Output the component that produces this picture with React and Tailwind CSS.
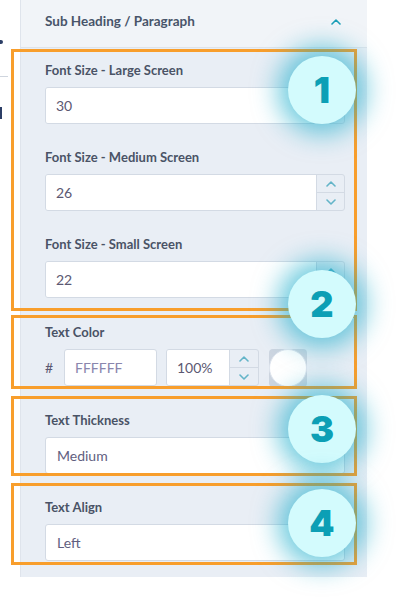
import React from "react";

const Chevron = ({ dir = "up", className = "" }) => (
  <svg width="10" height="6" viewBox="0 0 10 6" className={className} fill="none">
    {dir === "up" ? (
      <path d="M1 5 L5 1 L9 5" stroke="currentColor" strokeWidth="1.6" strokeLinecap="round" strokeLinejoin="round" />
    ) : (
      <path d="M1 1 L5 5 L9 1" stroke="currentColor" strokeWidth="1.6" strokeLinecap="round" strokeLinejoin="round" />
    )}
  </svg>
);

const Spinner = ({ w = "w-[28px]" }) => (
  <div className={`${w} h-full flex flex-col border-l border-[#d3dae4]`}>
    <div className="flex-1 flex items-center justify-center border-b border-[#d3dae4] text-[#63b4c8]">
      <Chevron dir="up" />
    </div>
    <div className="flex-1 flex items-center justify-center text-[#63b4c8]">
      <Chevron dir="down" />
    </div>
  </div>
);

const Label = ({ children }) => (
  <div className="text-[13px] leading-[16px] font-bold text-[#4a5366] mb-[9px]">{children}</div>
);

const NumberField = ({ label, value, className = "" }) => (
  <div className={className}>
    <Label>{label}</Label>
    <div className="w-[300px] h-[37px] flex border border-[#d3dae4] rounded-[3px] overflow-hidden">
      <div className="flex-1 bg-white flex items-center pl-[10px] text-[14px] text-[#5b5872]">{value}</div>
      <Spinner />
    </div>
  </div>
);

const SelectField = ({ label, value, className = "" }) => (
  <div className={className}>
    <Label>{label}</Label>
    <div className="w-[300px] h-[37px] bg-white border border-[#d3dae4] rounded-[3px] flex items-center pl-[11px] text-[14px] text-[#615e80]">
      {value}
    </div>
  </div>
);

const Badge = ({ n, top }) => (
  <div
    className="absolute left-[288px] w-[68px] h-[68px] rounded-full bg-[#d3fbfd] shadow-[0_0_26px_10px_rgba(14,168,200,0.6)] flex items-center justify-center text-[#0c9fb5] text-[36px] font-black"
    style={{ top, fontFamily: "Inter, 'Open Sans', sans-serif" }}
  >
    {n}
  </div>
);

export default function App() {
  return (
    <div
      className="relative w-[400px] h-[606px] bg-white overflow-hidden flex items-start"
      style={{ fontFamily: "Lato, 'Open Sans', sans-serif" }}
    >
      {/* clipped left sidebar remnants */}
      <div className="w-[20px] flex flex-col">
        <div className="mt-[40px] w-[3px] h-[4px] bg-[#2c3e66] rounded-r-sm" />
        <div className="mt-[32px] w-[8px] h-px bg-[#cfd5de]" />
        <div className="mt-[30px] w-[2px] h-[12px] bg-[#2c3e66]" />
      </div>

      {/* panel */}
      <div className="w-[347px] h-[577px] bg-[#e9eef5] border-l border-[#dfe4ec]">
        <div className="h-[48px] bg-[#f1f4f8] border-b border-[#dde3eb] flex items-center justify-between pl-[24px] pr-[26px] pb-[4px]">
          <span className="text-[13.5px] font-bold text-[#48546a]">Sub Heading / Paragraph</span>
          <Chevron dir="up" className="text-[#1a9fb8]" />
        </div>

        <div className="pl-[24px] pt-[14px]">
          <NumberField label="Font Size - Large Screen" value="30" />
          <NumberField label="Font Size - Medium Screen" value="26" className="mt-[25px]" />
          <NumberField label="Font Size - Small Screen" value="22" className="mt-[25px]" />

          <div className="mt-[26px]">
            <Label>Text Color</Label>
            <div className="flex items-center h-[37px]">
              <span className="w-[19px] text-[14px] text-[#5b5872]">#</span>
              <div className="w-[93px] h-full bg-white border border-[#d3dae4] rounded-[3px] flex items-center pl-[10px] text-[14px] text-[#8a86ad]">
                FFFFFF
              </div>
              <div className="ml-[9px] h-full flex border border-[#d3dae4] rounded-[3px] overflow-hidden">
                <div className="w-[62px] bg-white flex items-center pl-[10px] text-[14px] text-[#5b5872]">100%</div>
                <Spinner w="w-[29px]" />
              </div>
              <div className="ml-[10px] w-[38px] h-[38px] relative bg-[#cdd5e0] rounded-[4px] flex items-center justify-center">
                <div className="w-[38px] h-[38px] rounded-full bg-white border border-[#dfe5ee]" />
              </div>
            </div>
          </div>

          <SelectField label="Text Thickness" value="Medium" className="mt-[26px]" />
          <SelectField label="Text Align" value="Left" className="mt-[25px]" />
        </div>
      </div>

      {/* annotation boxes */}
      <div className="absolute left-[11px] top-[49px] w-[346px] h-[262px] border-[3px] border-[#f89e2c]" />
      <div className="absolute left-[11px] top-[315px] w-[346px] h-[74px] border-[3px] border-[#f89e2c]" />
      <div className="absolute left-[11px] top-[396px] w-[346px] h-[80px] border-[3px] border-[#f89e2c]" />
      <div className="absolute left-[11px] top-[483px] w-[346px] h-[82px] border-[3px] border-[#f89e2c]" />

      <Badge n="1" top={56} />
      <Badge n="2" top={270} />
      <Badge n="3" top={395} />
      <Badge n="4" top={489} />
    </div>
  );
}
